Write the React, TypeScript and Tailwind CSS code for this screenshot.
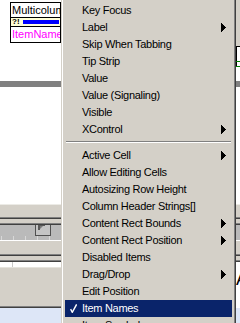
import React from 'react';

type Item = { label: string; sub?: boolean; checked?: boolean; active?: boolean };

const PROPS_A: Item[] = [
  { label: 'Key Focus' },
  { label: 'Label', sub: true },
  { label: 'Skip When Tabbing' },
  { label: 'Tip Strip' },
  { label: 'Value' },
  { label: 'Value (Signaling)' },
  { label: 'Visible' },
  { label: 'XControl', sub: true },
];

const PROPS_B: Item[] = [
  { label: 'Active Cell', sub: true },
  { label: 'Allow Editing Cells' },
  { label: 'Autosizing Row Height' },
  { label: 'Column Header Strings[]' },
  { label: 'Content Rect Bounds', sub: true },
  { label: 'Content Rect Position', sub: true },
  { label: 'Disabled Items' },
  { label: 'Drag/Drop', sub: true },
  { label: 'Edit Position' },
  { label: 'Item Names', checked: true, active: true },
  { label: 'Item Symbols' },
];

const Arrow = () => (
  <svg width="5" height="9" viewBox="0 0 5 9" shapeRendering="crispEdges" className="mr-[6px] shrink-0">
    <path d="M0 0h1v9H0z M1 1h1v7H1z M2 2h1v5H2z M3 3h1v3H3z M4 4h1v1H4z" fill="currentColor" />
  </svg>
);

const Check = () => (
  <svg width="7" height="9" viewBox="0 0 7 9" className="shrink-0">
    <path d="M0.6 5.2 L2.3 8.3 L6.6 0.4" stroke="white" strokeWidth="1.4" fill="none" />
  </svg>
);

const MenuRow = ({ item }: { item: Item }) => (
  <div
    className={`h-[17px] flex items-center whitespace-nowrap ${
      item.active ? 'bg-[#0a246a] text-white' : 'text-black'
    }`}
  >
    <div className="w-[17px] shrink-0 flex items-center pl-[5px]">{item.checked && <Check />}</div>
    <span className="flex-1">{item.label}</span>
    {item.sub && <Arrow />}
  </div>
);

// two-tone sunken rule
const Rule = () => (
  <div className="h-[2px] flex flex-col">
    <div className="h-[1px] bg-[#808080]" />
    <div className="h-[1px] bg-[#404040]" />
  </div>
);

const LowerBands = ({ withBox }: { withBox?: boolean }) => (
  <>
    <div className="h-[6px] bg-[#808080]" />
    <div className="h-[117px] bg-white" />
    <div className="h-[1px] bg-[#ecebe6]" />
    <div className="h-[12px] bg-[#d4d0c8]" />
    <Rule />
    <div className="h-[4px] bg-[#d4d0c8]" />
    <Rule />
    <div className="h-[15px] bg-[#bababa] flex flex-col">
      <div className="h-[11px]">
        {withBox && (
          <div className="ml-[35px] w-[16px] h-[11px] border-x border-b border-[#505050] bg-[#c4c4c4] relative">
            <svg width="8" height="6" viewBox="0 0 8 6" className="absolute left-[2px] top-0">
              <path d="M0 0h7v1H2v4H0z" fill="#5a5a5a" />
              <path d="M2 1h3L2 4z" fill="#7a7a7a" />
            </svg>
          </div>
        )}
      </div>
      <div className="h-[4px] flex gap-[11px] pl-[1px]">
        {[0, 1, 2, 3, 4].map((i) => (
          <div key={i} className="w-[1px] h-full bg-[#d8d8d8]" />
        ))}
      </div>
    </div>
    <div className="h-[1px] bg-white" />
    <div className="h-[13px] bg-[#d4d0c8]" />
    <Rule />
    <div className="h-[4px] bg-[#d4d0c8]" />
    <Rule />
  </>
);

export default function App() {
  return (
    <div
      className="w-[240px] h-[323px] overflow-hidden flex text-[11px] tracking-[-0.3px] bg-[#d4d0c8]"
      style={{ fontFamily: '"Liberation Sans", Arial, sans-serif' }}
    >
      {/* front panel behind the menu, left part */}
      <div className="w-[61px] shrink-0 flex flex-col">
        <div className="h-[81px] bg-white pt-[2px] pl-[10px]">
          <div className="w-[51px] border border-black bg-white overflow-hidden tracking-normal">
            <div className="h-[15px] leading-[14px] pl-[1px] whitespace-nowrap text-black border-b border-black">
              Multicolumn
            </div>
            <div className="h-[9px] bg-[#ffffd6] flex items-center border-b border-black">
              <span className="w-[12px] pl-[1px] text-[8px] font-bold leading-none">?!</span>
              <div className="h-[4px] w-[36px] bg-[#0000ff]" />
            </div>
            <div className="h-[15px] leading-[15px] pl-[1px] whitespace-nowrap text-[#ff00ff]">ItemName</div>
          </div>
        </div>
        <LowerBands withBox />
        <div className="h-[5px] bg-white flex pl-[12px]">
          <div className="w-[1px] h-full bg-[#c8c8c8]" />
        </div>
        <div className="h-[1px] bg-[#e4e2dc]" />
        <div className="h-[38px] bg-[#d4d0c8]" />
        <Rule />
        <div className="h-[15px] bg-[#dde6f7]" />
      </div>

      {/* shortcut menu */}
      <div className="w-[175px] shrink-0 border-l border-l-[#d4d0c8] border-r border-r-[#404040]">
        <div className="h-full border-l border-l-white border-r border-r-[#808080] px-[2px] pt-[2px]">
          {PROPS_A.map((it) => (
            <MenuRow key={it.label} item={it} />
          ))}
          <div className="h-[9px] pt-[3px] px-[1px]">
            <div className="h-[2px] border-t border-t-[#808080] border-b border-b-white" />
          </div>
          {PROPS_B.map((it) => (
            <MenuRow key={it.label} item={it} />
          ))}
        </div>
      </div>

      {/* front panel, right sliver */}
      <div className="w-[4px] shrink-0 flex flex-col">
        <div className="h-[46px] bg-[#d4d0c8]" />
        <div className="h-[1px] bg-black" />
        <div className="h-[14px] bg-white border-l border-black" />
        <div className="h-[1px] bg-[#008000]" />
        <div className="h-[4px] bg-white border-l border-black" />
        <div className="h-[1px] bg-[#008000]" />
        <div className="h-[14px] bg-white" />
        <LowerBands />
        <div className="h-[46px] bg-white overflow-hidden pt-[8px]">
          <span className="block text-[18px] leading-none tracking-normal text-black">A</span>
        </div>
        <div className="h-[15px] bg-[#dde6f7]" />
      </div>
    </div>
  );
}
